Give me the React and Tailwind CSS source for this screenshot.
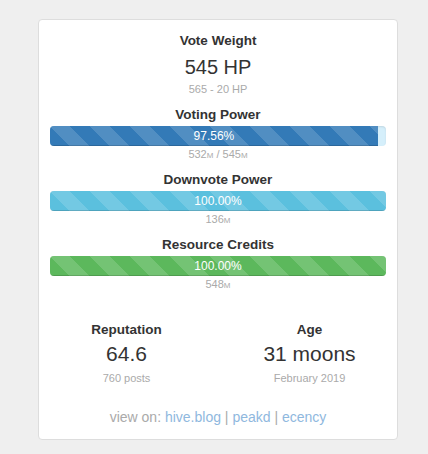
const stripes =
  'bg-[linear-gradient(45deg,rgba(255,255,255,.15)_25%,transparent_25%,transparent_50%,rgba(255,255,255,.15)_50%,rgba(255,255,255,.15)_75%,transparent_75%,transparent)] bg-size-[40px_40px]'

const Label = ({ children }) => (
  <div className="text-[13.5px] font-bold leading-[20px] text-[#333]">{children}</div>
)

const Sub = ({ children, className = '' }) => (
  <div className={`h-[16px] text-[11px] leading-[16px] text-[#aaa] ${className}`}>{children}</div>
)

const M = () => <span className="text-[8px] leading-none">M</span>

const Bar = ({ pct, label, color, track = 'bg-[#f5f5f5]' }) => (
  <div className={`mt-px h-5 rounded-[4px] overflow-hidden flex ${track} shadow-[inset_0_1px_2px_rgba(0,0,0,0.1)]`}>
    <div
      className={`h-full ${color} ${stripes} shadow-[inset_0_-1px_0_rgba(0,0,0,0.15)] text-white text-[12px] leading-[20px] text-center`}
      style={{ width: `${pct}%` }}
    >
      {label}
    </div>
  </div>
)

export default function App() {
  return (
    <div className="min-h-[454px] bg-[#efefef] pt-[19px] font-['Liberation_Sans',Arial,sans-serif]">
      <div className="ml-[38px] w-[360px] bg-white border border-[#ddd] rounded-[4px] px-[11px] pt-[11px] pb-[12px] text-center">
        <Label>Vote Weight</Label>
        <div className="mt-[2px] text-[20px] leading-[28px] text-[#333]">545 HP</div>
        <Sub>565 - 20 HP</Sub>

        <div className="mt-[8px]">
          <Label>Voting Power</Label>
          <Bar pct={97.56} label="97.56%" color="bg-[#337ab7]" track="bg-[#d5effb]" />
          <Sub>532<M /> / 545<M /></Sub>
        </div>

        <div className="mt-[8px]">
          <Label>Downvote Power</Label>
          <Bar pct={100} label="100.00%" color="bg-[#5bc0de]" />
          <Sub>136<M /></Sub>
        </div>

        <div className="mt-[8px]">
          <Label>Resource Credits</Label>
          <Bar pct={100} label="100.00%" color="bg-[#5cb85c]" />
          <Sub>548<M /></Sub>
        </div>

        <div className="-mx-[15px] mt-[28px] grid grid-cols-2">
          <div>
            <Label>Reputation</Label>
            <div className="text-[21px] leading-[28px] text-[#333]">64.6</div>
            <Sub className="mt-[2px]">760 posts</Sub>
          </div>
          <div>
            <Label>Age</Label>
            <div className="text-[21px] leading-[28px] text-[#333]">31 moons</div>
            <Sub className="mt-[2px]">February 2019</Sub>
          </div>
        </div>

        <div className="mt-[21px] text-[14px] leading-[20px] text-[#aaa]">
          view on: <a className="text-[#8fb8de]">hive.blog</a> | <a className="text-[#8fb8de]">peakd</a> |{' '}
          <a className="text-[#8fb8de]">ecency</a>
        </div>
      </div>
    </div>
  )
}
